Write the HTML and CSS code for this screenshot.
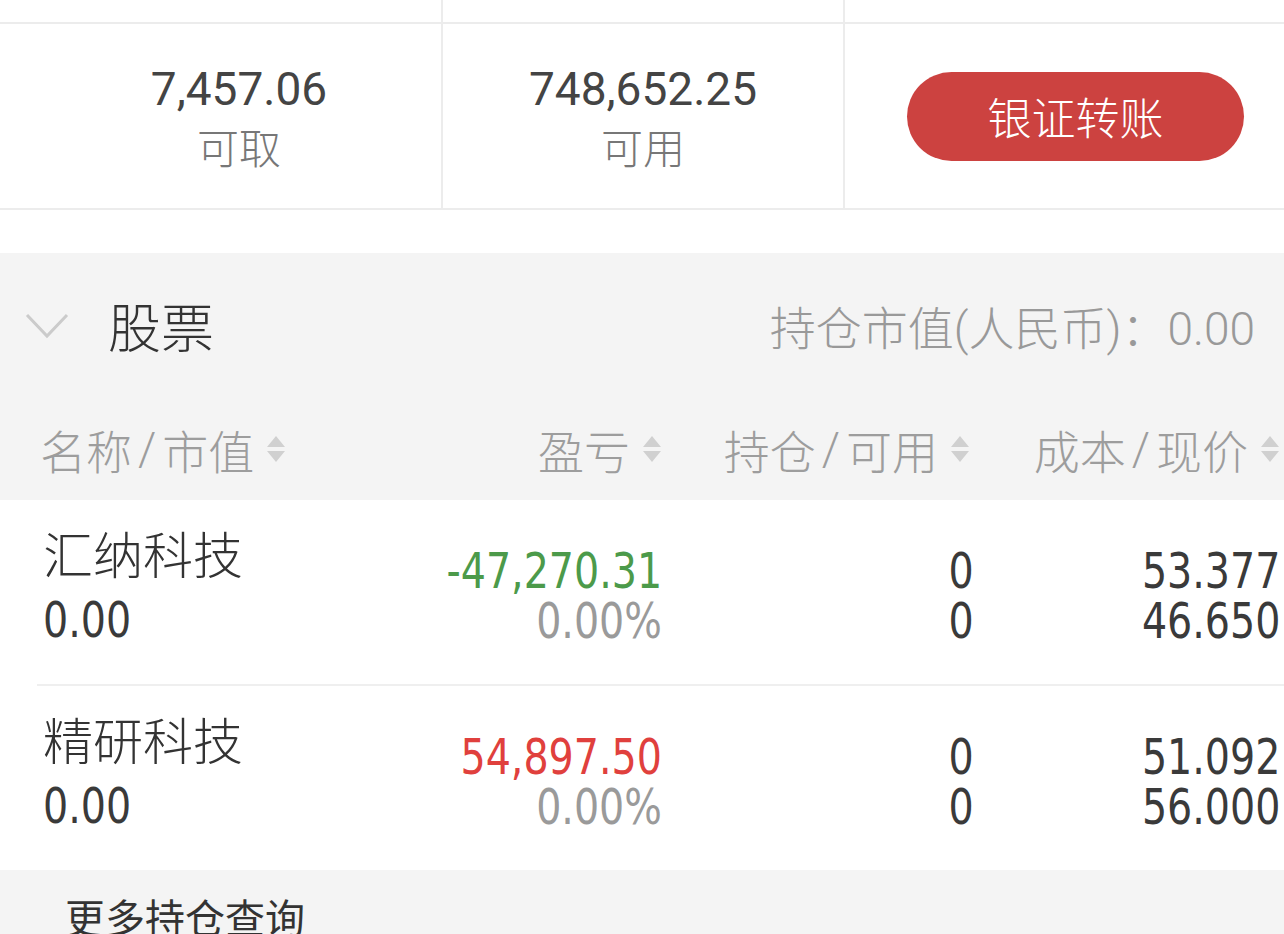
FILE: index.html
```html
<!DOCTYPE html>
<html lang="zh-CN">
<head>
    <meta charset="UTF-8">
    <meta name="viewport" content="width=device-width, initial-scale=1.0">
    <title>持仓</title>
    <link rel="stylesheet" href="styles.css">
</head>
<body>
    <div class="page">
        <!-- 资金概览 -->
        <div class="funds-strip">
            <div class="strip-cell"></div>
            <div class="strip-cell"></div>
            <div class="strip-cell last"></div>
        </div>
        <div class="funds">
            <div class="fund-cell first">
                <div class="fund-value">7,457.06</div>
                <div class="fund-label">可取</div>
            </div>
            <div class="fund-cell">
                <div class="fund-value">748,652.25</div>
                <div class="fund-label">可用</div>
            </div>
            <div class="fund-cell action">
                <a href="#" class="transfer-btn">银证转账</a>
            </div>
        </div>

        <!-- 股票持仓 -->
        <div class="holdings">
            <div class="holdings-head">
                <svg class="chevron" width="46" height="28" viewBox="0 0 46 28">
                    <path d="M3 3 L23 24 L43 3" fill="none" stroke="#cbcbcb" stroke-width="3"/>
                </svg>
                <span class="holdings-title">股票</span>
                <span class="holdings-total">持仓市值(人民币)：0.00</span>
            </div>
            <div class="table-head">
                <div class="th left">名称<span class="slash">/</span>市值<svg class="sort" width="20" height="32" viewBox="0 0 20 32"><path d="M10 3 L19 14 L1 14 Z M1 18 L19 18 L10 29 Z" fill="#d0d0d0"/></svg></div>
                <div class="th">盈亏<svg class="sort" width="20" height="32" viewBox="0 0 20 32"><path d="M10 3 L19 14 L1 14 Z M1 18 L19 18 L10 29 Z" fill="#d0d0d0"/></svg></div>
                <div class="th">持仓<span class="slash">/</span>可用<svg class="sort" width="20" height="32" viewBox="0 0 20 32"><path d="M10 3 L19 14 L1 14 Z M1 18 L19 18 L10 29 Z" fill="#d0d0d0"/></svg></div>
                <div class="th">成本<span class="slash">/</span>现价<svg class="sort" width="20" height="32" viewBox="0 0 20 32"><path d="M10 3 L19 14 L1 14 Z M1 18 L19 18 L10 29 Z" fill="#d0d0d0"/></svg></div>
            </div>
        </div>

        <div class="rows">
            <div class="row">
                <div class="cell name-cell">
                    <div class="stock-name">汇纳科技</div>
                    <div class="num dark">0.00</div>
                </div>
                <div class="cell num-cell">
                    <div class="num down">-47,270.31</div>
                    <div class="num muted">0.00%</div>
                </div>
                <div class="cell num-cell">
                    <div class="num dark">0</div>
                    <div class="num dark">0</div>
                </div>
                <div class="cell num-cell">
                    <div class="num dark">53.377</div>
                    <div class="num dark">46.650</div>
                </div>
            </div>
            <div class="row-divider"></div>
            <div class="row">
                <div class="cell name-cell">
                    <div class="stock-name">精研科技</div>
                    <div class="num dark">0.00</div>
                </div>
                <div class="cell num-cell">
                    <div class="num up">54,897.50</div>
                    <div class="num muted">0.00%</div>
                </div>
                <div class="cell num-cell">
                    <div class="num dark">0</div>
                    <div class="num dark">0</div>
                </div>
                <div class="cell num-cell">
                    <div class="num dark">51.092</div>
                    <div class="num dark">56.000</div>
                </div>
            </div>
        </div>

        <div class="more">更多持仓查询</div>
    </div>
</body>
</html>
```

FILE: styles.css
```css
body {
    margin: 0;
    padding: 0;
    background-color: #fff;
    color: #333;
    font-family: Roboto, "Noto Sans CJK SC", sans-serif;
    overflow: hidden;
}
.page {
    width: 1284px;
    height: 934px;
    overflow: hidden;
}

/* 资金概览 */
.funds-strip,
.funds {
    display: grid;
    grid-template-columns: 443px 402px 1fr;
}
.funds-strip {
    height: 22px;
    border-bottom: 2px solid #ececec;
}
.strip-cell {
    border-right: 2px solid #ececec;
}
.strip-cell.last {
    border-right: none;
}
.funds {
    height: 184px;
    border-bottom: 2px solid #ececec;
}
.fund-cell {
    display: flex;
    flex-direction: column;
    justify-content: center;
    align-items: center;
    border-right: 2px solid #ececec;
    padding-top: 8px;
}
.fund-cell.first {
    padding-left: 37px;
}
.fund-cell.action {
    border-right: none;
    padding-left: 22px;
    padding-top: 0;
}
.fund-value {
    font-size: 46px;
    line-height: 60px;
    color: #444;
}
.fund-label {
    font-size: 42px;
    line-height: 62px;
    font-weight: 300;
    color: #777;
}
.transfer-btn {
    display: flex;
    justify-content: center;
    align-items: center;
    width: 337px;
    height: 89px;
    border-radius: 45px;
    background-color: #cc4240;
    color: #fff;
    font-size: 44px;
    font-weight: 300;
    text-decoration: none;
}

/* 股票持仓 */
.holdings {
    margin-top: 43px;
    background-color: #f4f4f4;
}
.holdings-head {
    display: flex;
    align-items: center;
    height: 144px;
    padding: 0 29px 0 24px;
}
.chevron {
    margin-top: 2px;
}
.holdings-title {
    margin-left: 38px;
    font-size: 53px;
    font-weight: 300;
    color: #333;
}
.holdings-total {
    margin-left: auto;
    font-size: 46px;
    font-weight: 300;
    color: #999;
}
.table-head,
.row {
    display: grid;
    grid-template-columns: 297px 322px 312px 1fr;
    padding: 0 4px 0 43px;
}
.table-head {
    height: 103px;
    align-items: center;
    padding-left: 40px;
    grid-template-columns: 300px 322px 308px 1fr;
}
.th {
    display: flex;
    align-items: center;
    justify-content: flex-end;
    font-size: 46px;
    font-weight: 300;
    color: #9d9d9d;
}
.th.left {
    justify-content: flex-start;
}
.slash {
    margin: 0 6px;
}
.sort {
    margin-left: 12px;
}

.rows {
    background-color: #fff;
}
.row {
    height: 184px;
}
.row-divider {
    height: 2px;
    margin-left: 37px;
    background-color: #efefef;
}
.cell {
    display: flex;
    flex-direction: column;
}
.name-cell {
    padding-top: 32px;
    align-items: flex-start;
}
.num-cell {
    padding-top: 46px;
    align-items: flex-end;
}
.stock-name {
    font-size: 50px;
    line-height: 50px;
    font-weight: 300;
    margin-bottom: 13px;
    color: #333;
}
.num {
    font-family: "DejaVu Sans", sans-serif;
    font-stretch: condensed;
    font-size: 50px;
    line-height: 50px;
    transform: scaleX(0.88);
    transform-origin: right center;
}
.name-cell .num {
    transform-origin: left center;
}
.dark {
    color: #3a3a3a;
}
.muted {
    color: #9a9a9a;
}
.down {
    color: #4c9a4a;
}
.up {
    color: #e0403d;
}

.more {
    background-color: #f4f4f4;
    height: 80px;
    padding: 20px 0 0 65px;
    font-size: 40px;
    line-height: 60px;
    color: #333;
}
```
